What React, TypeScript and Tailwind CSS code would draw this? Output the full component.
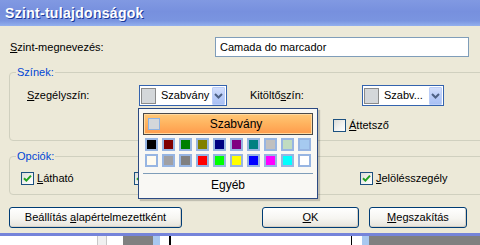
import React from 'react';

const row1 = [
  'bg-[#000000]', 'bg-[#800000]', 'bg-[#008000]', 'bg-[#808000]', 'bg-[#000080]',
  'bg-[#800080]', 'bg-[#008080]', 'bg-[#C0C0C0]', 'bg-[#C0DCC0]', 'bg-[#A6CAF0]',
];
const row2 = [
  'bg-[#FFFBF0]', 'bg-[#A0A0A4]', 'bg-[#808080]', 'bg-[#FF0000]', 'bg-[#00FF00]',
  'bg-[#FFFF00]', 'bg-[#0000FF]', 'bg-[#FF00FF]', 'bg-[#00FFFF]', 'bg-[#FFFFFF]',
];

function Arrow() {
  return (
    <div className="flex h-[18px] w-[13px] items-center justify-center rounded-[1px] border border-[#BCCEF7] bg-[linear-gradient(180deg,#D3DFFD_0%,#B8CBF8_55%,#A9C0F4_100%)]">
      <svg width="9" height="6" viewBox="0 0 9 6">
        <path d="M1 1 L4.5 4.5 L8 1" fill="none" stroke="#4D6185" strokeWidth="2" />
      </svg>
    </div>
  );
}

function Combo({ text, w }: { text: string; w: string }) {
  return (
    <div className={`flex h-[21px] ${w} items-center border border-[#3463AE] bg-white pl-[1px] pr-[1px]`}>
      <div className="h-[16px] w-[15px] border border-[#8A8A8A] bg-[#D4D7DA]" />
      <span className="ml-[5px] flex-1 whitespace-nowrap">{text}</span>
      <Arrow />
    </div>
  );
}

function Check({ checked }: { checked?: boolean }) {
  return (
    <div className="flex h-[13px] w-[13px] shrink-0 items-center justify-center border border-[#1C5180] bg-[linear-gradient(135deg,#DCDCD7_0%,#F4F4F1_60%,#FFFFFF_100%)]">
      {checked && (
        <svg width="9" height="9" viewBox="0 0 9 9">
          <path d="M1 4.2 L3.4 6.6 L8 1.6" fill="none" stroke="#21A121" strokeWidth="2" />
        </svg>
      )}
    </div>
  );
}

function Button({ w, children }: { w: string; children: React.ReactNode }) {
  return (
    <div className={`flex h-[21px] ${w} items-center justify-center rounded-[3px] border border-[#003C74] bg-[linear-gradient(180deg,#FFFFFF_0%,#F6F5F1_55%,#E6E3DA_100%)] shadow-[inset_-1px_-1px_0_#D6D0C5]`}>
      <span>{children}</span>
    </div>
  );
}

export default function App() {
  return (
    <div className="relative h-[245px] w-[480px] overflow-hidden bg-white text-[11px] leading-[13px] text-black [font-family:'Liberation_Sans',Arial,sans-serif]">
      {/* Title bar */}
      <div className="flex h-[26px] items-center bg-[linear-gradient(180deg,#8199E2_0%,#7790DE_45%,#7A95E0_80%,#93B0EE_100%)] pl-[5px]">
        <span className="text-[14px] font-bold tracking-[0.3px] text-white [text-shadow:1px_1px_0_#1A3A9A]">
          Szint-tulajdonságok
        </span>
      </div>

      {/* Body */}
      <div className="flex h-[207px] flex-col bg-[#ECE9D8] pl-[9px]">
        <div className="mt-[11px] flex h-[20px] items-center">
          <span className="pl-[1px]">
            <span className="underline">S</span>zint-megnevezés:
          </span>
          <div className="ml-auto mr-[11px] flex h-[20px] w-[254px] items-center border border-[#7F9DB9] bg-white pl-[4px]">
            Camada do marcador
          </div>
        </div>

        {/* Színek */}
        <fieldset className="mt-[9px] w-[490px] rounded-[4px] border border-[#D0D0BF] px-0 pb-[8px]">
          <legend className="ml-[6px] px-[1px] text-[#0046D5]">Színek:</legend>
          <div className="mt-[6px] flex h-[21px] items-center">
            <span className="w-[129px] pl-[17px]">
              <span className="underline">S</span>zegélyszín:
            </span>
            <Combo text="Szabvány" w="w-[88px]" />
            <span className="ml-[23px] w-[112px]">
              Kitöltő<span className="underline">s</span>zín:
            </span>
            <Combo text="Szabv..." w="w-[82px]" />
          </div>
          <div className="mt-[13px] flex h-[13px] items-center pl-[323px]">
            <Check />
            <span className="ml-[3px]">
              <span className="underline">Á</span>ttetsző
            </span>
          </div>
        </fieldset>

        {/* Opciók */}
        <fieldset className="mt-[9px] w-[490px] rounded-[4px] border border-[#D0D0BF] px-0 pb-[9px]">
          <legend className="ml-[6px] px-[1px] text-[#0046D5]">Opciók:</legend>
          <div className="mt-[9px] flex h-[13px] items-center pl-[11px]">
            <Check checked />
            <span className="ml-[3px] w-[97px]">
              <span className="underline">L</span>átható
            </span>
            <Check checked />
            <span className="ml-[3px] w-[210px]">Címke</span>
            <Check checked />
            <span className="ml-[3px]">
              <span className="underline">J</span>elölésszegély
            </span>
          </div>
        </fieldset>

        <div className="mt-[12px] flex">
          <Button w="w-[173px]">
            Beállítás <span className="underline">a</span>lapértelmezettként
          </Button>
          <div className="ml-[80px]">
            <Button w="w-[97px]">
              <span className="underline">O</span>K
            </Button>
          </div>
          <div className="ml-[10px]">
            <Button w="w-[98px]">
              <span className="underline">M</span>egszakítás
            </Button>
          </div>
        </div>
      </div>

      {/* window below */}
      <div className="h-[3px] bg-[#7584DA]" />
      <div className="flex h-[9px]">
        <div className="ml-[97px] w-[10px] border-x border-[#C8C8C8] bg-[#F0F0F0]" />
        <div className="ml-[16px] w-[30px] bg-[#808080]" />
        <div className="w-[7px] bg-[#A8C8F0]" />
        <div className="ml-[9px] w-[2px] bg-black" />
        <div className="ml-[180px] w-[1px] bg-black" />
        <div className="ml-[10px] w-[7px] bg-[#A8C8F0]" />
        <div className="flex-1 bg-[#808080]" />
      </div>

      {/* Dropdown popup */}
      <div className="absolute left-[138px] top-[108px] flex h-[91px] w-[180px] flex-col border border-[#2C4A82] bg-[#F9F8F4] px-[4px] pt-[4px] shadow-[2px_2px_1px_rgba(0,0,0,0.18)]">
        <div className="flex h-[22px] items-center border border-[#4A4A4A] bg-[linear-gradient(180deg,#FFC877_0%,#FFB25E_50%,#FF9B4C_100%)] pl-[4px] shadow-[inset_0_0_0_1px_#FFD9A0]">
          <div className="h-[12px] w-[12px] border border-[#8DB2E3] bg-[#D4D7DA]" />
          <span className="flex-1 text-center text-[12px]">Szabvány</span>
        </div>
        <div className="mt-[3px] flex gap-[4px] pl-[2px]">
          {row1.map((c, i) => (
            <div key={i} className={`h-[13px] w-[13px] border-2 border-[#97B5E2] ${c}`} />
          ))}
        </div>
        <div className="mt-[3px] flex gap-[4px] pl-[2px]">
          {row2.map((c, i) => (
            <div key={i} className={`h-[13px] w-[13px] border-2 border-[#97B5E2] ${c}`} />
          ))}
        </div>
        <div className="mt-[6px] h-[1px] bg-[#7F9DB9]" />
        <div className="flex flex-1 items-center justify-center pb-[2px] text-[12px]">Egyéb</div>
      </div>
    </div>
  );
}
